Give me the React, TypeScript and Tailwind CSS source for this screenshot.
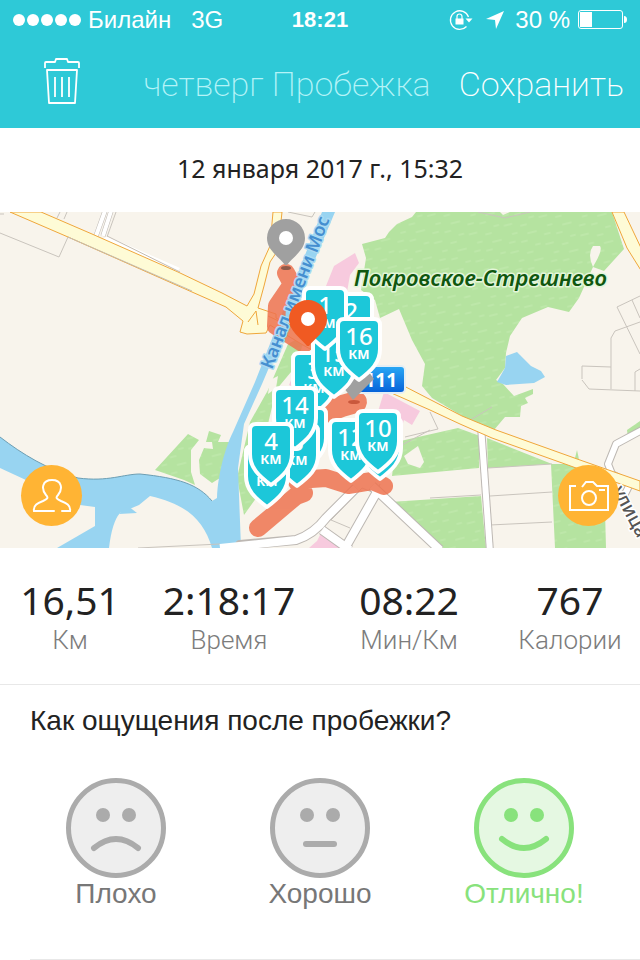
import { useState } from "react";
import clsx from "clsx";

type ShieldProps = {
  x: number;
  y: number;
  km: string;
};

const BACK_SHIELDS: ShieldProps[] = [
  { x: 351, y: 292, km: "2" },
  { x: 314, y: 351, km: "3" },
  { x: 334, y: 334, km: "15" },
  { x: 325, y: 286, km: "1" },
];

const FRONT_SHIELDS: ShieldProps[] = [
  { x: 359, y: 317, km: "16" },
  { x: 305, y: 406, km: "" },
  { x: 297, y: 423, km: "5" },
  { x: 295, y: 386, km: "14" },
  { x: 267, y: 444, km: "6" },
  { x: 271, y: 422, km: "4" },
  { x: 380, y: 416, km: "" },
  { x: 351, y: 418, km: "12" },
  { x: 378, y: 409, km: "10" },
];

const STATS = [
  { value: "16,51", label: "Км" },
  { value: "2:18:17", label: "Время" },
  { value: "08:22", label: "Мин/Км" },
  { value: "767", label: "Калории" },
];

const MOODS = [
  { id: "bad", label: "Плохо", mouth: "M28 70Q50 52 72 70" },
  { id: "good", label: "Хорошо", mouth: "M36 66H64" },
  { id: "great", label: "Отлично!", mouth: "M28 61Q50 79 72 61" },
];

function Shield({ x, y, km }: ShieldProps) {
  return (
    <g transform={`translate(${x} ${y})`} textAnchor="middle" fill="#fff">
      <path
        d="M-15 2H15Q21 2 21 8V32C21 46 12 54 0 63C-12 54 -21 46 -21 32V8Q-21 2 -15 2Z"
        fill="#1cc7d9"
        stroke="#fff"
        strokeWidth="4"
        strokeLinejoin="round"
      />
      {km ? (
        <>
          <text y="28" fontSize="24" fontWeight="500">
            {km}
          </text>
          <text y="42" fontSize="13" fontWeight="700">
            КМ
          </text>
        </>
      ) : null}
    </g>
  );
}

function Pin({ x, y, color }: { x: number; y: number; color: string }) {
  return (
    <g transform={`translate(${x} ${y})`}>
      <path
        d="M0 -19A19 19 0 0 1 19 0C19 12 8 18 1 27H-1C-8 18 -19 12 -19 0A19 19 0 0 1 0 -19Z"
        fill={color}
      />
      <circle r="7" fill="#fff" />
    </g>
  );
}

function RouteMap() {
  return (
    <svg
      viewBox="0 212 640 336"
      className="block h-auto w-full bg-[#f8f4ec] font-['Noto_Sans',sans-serif]"
      role="img"
      aria-label="Карта пробежки"
    >
      <defs>
        <linearGradient id="badge" x1="0" y1="0" x2="0" y2="1">
          <stop offset="0" stopColor="#2aa9f5" />
          <stop offset="1" stopColor="#0560d8" />
        </linearGradient>
        <pattern
          id="grass"
          width="36"
          height="28"
          patternUnits="userSpaceOnUse"
          patternTransform="rotate(-14)"
        >
          <rect width="36" height="28" fill="#b5e3a0" />
          <path
            d="M3 5h7M19 9h5M29 3h4M9 15h4M24 18h8M4 23h5M16 25h5"
            stroke="#bde7a9"
            strokeWidth="2"
            strokeLinecap="round"
          />
        </pattern>
      </defs>

      {/* parks */}
      <g fill="url(#grass)">
        <path d="M416 212L412 217L397 224L389 232L385 238L362 244L366 258L361 290L375 300L380 318L399 309L412 340L425 364L422 386L432 398L462 416L494 430L505 417L520 417L521 406L528 403L525 398L533 394L533 389L514 396L503 384L496 380L505 368L506 353L510 336L522 318L548 307L569 312L579 298L593 267L604 271L624 249L612 212Z" />
        <path d="M396 442L458 428L480 436L479 468L392 476Z" />
        <path d="M487 438L552 464L488 468Z" />
        <path d="M390 502L481 496L486 548H442Z" />
        <path d="M551 464L567 464L574 462L577 450L580 464L604 472L606 548H555Z" />
        <path d="M155 470L188 434L199 440L191 450V472L195 485L184 480Z" />
        <path d="M209 431L221 435L218 442L230 442L220 478L212 483L200 474L199 460L204 448L213 449L212 442L206 442Z" />
        <path d="M288 344L306 334L296 366L276 390L268 424L262 490L244 515L237 478L250 422L268 390Z" />
        <path d="M627 430L640 421V434L628 438Z" />
      </g>
      <g fill="#f8f4ec">
        <path d="M593 267Q587 254 593 246H600Q603 250 594 265Z" />
        <path d="M500 212L503 215L510 212Z" />
        <path d="M404 456L418 446L424 462L420 468L408 464Z" />
        <path d="M270 380L278 376L276 388L268 394Z" />
      </g>

      {/* districts */}
      <g fill="#f7cade">
        <path d="M334 266L355 253L359 263L350 275L347 292L326 286Z" />
        <path d="M384 392L420 411L412 425L404 420L400 432L376 418Z" />
        <path d="M321 533L345 548H309L317 541Z" />
        <path d="M289 385L300 360L306 370L300 390Z" />
      </g>

      {/* water */}
      <g fill="#98d4f1">
        <path d="M0 437C22 454 48 470 78 478C108 482 124 474 140 474C178 478 198 484 212 501L217 498C218 472 226 446 233 432L255 382L322 212H335L262 384L244 424L238 468L241 548H212C204 520 186 504 150 496L139 505L120 513Q112 522 109 548H57L95 526V507L80 505L0 468Z" />
        <path d="M497 382L505 368L506 356L517 352L531 366L541 371L545 377L534 383L506 385Z" />
      </g>
      <path d="M128 506L137 513L119 514Z" fill="#98d4f1" />
      <path
        d="M0 437C22 454 48 470 78 478C108 482 124 474 140 474C178 478 198 484 212 501"
        fill="none"
        stroke="#6d9eb3"
      />

      {/* minor streets */}
      <g fill="none" stroke="#c9c4bd" strokeWidth="1">
        <path d="M0 233L59 257L68 237M57 218L60 212M64 219L67 212M107 237L116 212" />
        <path d="M288 212L312 217L315 212M0 214H4" />
        <path d="M640 296L617 307L640 354M632 300L640 318M640 322L615 331L611 338V389M582 379V366L611 367M582 380L589 389L640 391M635 391V372L640 369" />
        <path d="M405 437L438 429L430 412M430 498L481 495M490 496L552 492M490 525L552 522M400 446L430 430M488 468L552 464" />
        <path d="M350 528L331 520L362 488L372 492M380 484L378 490M389 502L442 548M138 548L220 544" />
        <path d="M467 422L492 407M478 212L505 218L530 212" />
      </g>
      <g fill="none" strokeLinejoin="round">
        <g stroke="#bdb8b3" strokeWidth="10">
          <path d="M238 552L240 545L296 540Q314 534 326 518L356 488M322 530L350 550" />
          <path d="M344 550L378 490M372 486L440 550" />
          <path d="M481 426L490 552" strokeWidth="8" />
          <path d="M96 236L106 208M103 236L112 208" strokeWidth="5" />
          <path d="M642 430L616 444L608 464L612 474L630 484L624 496" strokeWidth="8" />
        </g>
        <g stroke="#fff" strokeWidth="8">
          <path d="M220 548L296 540Q314 534 326 518L356 488M322 530L350 550" />
          <path d="M344 550L378 490M372 486L440 550" />
          <path d="M481 426L490 552" strokeWidth="6" />
          <path d="M96 236L106 208M103 236L112 208" strokeWidth="4" />
          <path d="M642 430L616 444L608 464L612 474L630 484L624 496" strokeWidth="6" />
        </g>
      </g>

      {/* highways */}
      <path d="M107 236L180 268L176 274L100 242Z" fill="#fff" />
      <g stroke="#efa63a" strokeWidth="1" fill="#fefbd6">
        <path d="M10 212L68 237L192 292L226 307L243 321L240 332L247 334L266 333L270 325L303 345L380 388L430 410L460 424L492 438L565 464L640 491V481L580 460L496 430L462 416L400 384L340 354L276 318V314L258 308L264 286L270 262L278 250L282 212H273L270 246L261 266L254 294L247 306L222 293L178 272L92 234L41 212Z" />
        <path d="M612 212H624L642 250V272L627 248Z" />
      </g>
      <path
        d="M107 236L180 272M68 237L192 291"
        stroke="#c4bcb2"
        fill="none"
      />
      <path d="M248 322L256 311L258 325M268 316L302 332" stroke="#efa63a" fill="none" />

      {/* track */}
      <g
        fill="none"
        stroke="#ee7350"
        strokeLinecap="round"
        strokeLinejoin="round"
        strokeWidth="18"
        opacity="0.85"
      >
        <path d="M286 273L292 284L277 306L276 326L304 344" />
        <path d="M356 402L342 406L326 412" strokeWidth="22" />
        <path d="M258 528L296 496L304 493L296 480L326 478L348 485L372 481L384 486" />
      </g>

      <g fontWeight="600" strokeLinejoin="round" paintOrder="stroke">
        <text
          transform="translate(272 370) rotate(-69)"
          fontSize="18"
          fill="#458fd0"
          stroke="#a9daf3"
          strokeWidth="3"
        >
          Канал имени Мос
        </text>
        <text
          x="354"
          y="286"
          fontSize="22"
          fontStyle="italic"
          fill="#10570f"
          stroke="#e4f6da"
          strokeWidth="3"
        >
          Покровское-Стрешнево
        </text>
        <text
          transform="translate(612 490) rotate(62)"
          fontSize="19"
          fontWeight="500"
          fill="#555"
          stroke="#fff"
          strokeWidth="3"
        >
          улица
        </text>
      </g>

      <Pin x={286} y={238} color="#a0a0a0" />
      <ellipse cx="286" cy="268" rx="5" ry="2" fill="#8f5a49" />
      <rect
        x="356"
        y="366"
        width="49"
        height="27"
        rx="4"
        fill="url(#badge)"
        stroke="#e5eef4"
        strokeWidth="2"
      />
      <text x="397" y="387" fontSize="19" fontWeight="700" fill="#fff" textAnchor="end">
        111
      </text>
      <path d="M344 388L366 368L374 379L353 400Z" fill="#a0a0a0" />
      <ellipse cx="354" cy="402" rx="6" ry="2" fill="#c9583c" />
      {BACK_SHIELDS.map((shield) => (
        <Shield key={`${shield.x}-${shield.y}`} {...shield} />
      ))}
      {FRONT_SHIELDS.map((shield) => (
        <Shield key={`${shield.x}-${shield.y}`} {...shield} />
      ))}
      <Pin x={308} y={319} color="#f05a22" />
    </svg>
  );
}

function StatusBar() {
  return (
    <div className="grid h-10 grid-cols-[1fr_auto_1fr] items-center px-3 text-[24px] leading-none">
      <div className="flex items-center">
        <svg width="70" height="14" viewBox="0 0 70 14" fill="currentColor">
          {[6, 20, 34, 48, 62].map((cx) => (
            <circle key={cx} cx={cx + 1} cy="7" r="6" />
          ))}
        </svg>
        <span className="ml-1.5">Билайн</span>
        <span className="ml-5">3G</span>
      </div>
      <span className="text-[22px] font-bold">18:21</span>
      <div className="flex items-center justify-end">
        <svg width="24" height="22" viewBox="0 0 24 22" fill="none" stroke="currentColor">
          <path d="M19.500 8A9.300 9.300 0 1 0 17.500 17.500" strokeWidth="1.3" />
          <path d="M16.500 9.500h7l-3.500 4z" fill="currentColor" stroke="none" />
          <rect x="6.500" y="9.500" width="8" height="6" fill="currentColor" stroke="none" />
          <path d="M8 10V7.500a2.500 2.500 0 0 1 5 0V10" strokeWidth="1.200" />
        </svg>
        <svg width="20" height="18" viewBox="0 0 20 18" className="ml-3" fill="currentColor">
          <path d="M19 0L11 18L10 9L1 8Z" />
        </svg>
        <span className="ml-2.5">30 %</span>
        <svg width="50" height="20" viewBox="0 0 50 20" className="ml-2" fill="none">
          <rect x="0.500" y="0.500" width="44" height="18" rx="2.500" stroke="currentColor" />
          <path d="M2 2H14V17H2ZM46 6Q49 6 49 9.500Q49 13 46 13Z" fill="currentColor" />
        </svg>
      </div>
    </div>
  );
}

function TrashIcon() {
  return (
    <svg
      width="38"
      height="48"
      viewBox="0 0 38 48"
      fill="none"
      stroke="currentColor"
      strokeWidth="1.8"
      strokeLinejoin="round"
    >
      <path d="M2 11V6Q2 5 3 5H12L13 2H24L25 5H35Q36 5 36 6V11" />
      <path d="M4 13H34L32 46H6ZM12 20V40M19 20V40M26 20V40" />
    </svg>
  );
}

export default function App() {
  const [mood, setMood] = useState("great");

  return (
    <div className="min-h-screen w-full bg-white font-['Liberation_Sans',sans-serif] text-[#222]">
      <header className="bg-[#2ec9d7] text-white">
        <StatusBar />
        <div className="flex h-22 items-center pr-4 pl-[43px] font-['Roboto',sans-serif] text-[34px] leading-10 font-extralight">
          <button type="button" aria-label="Удалить" className="pb-1.5">
            <TrashIcon />
          </button>
          <h1 className="flex-1 pr-7 text-right whitespace-nowrap text-[#b5f3f7]">
            четверг Пробежка
          </h1>
          <button type="button">Сохранить</button>
        </div>
      </header>

      <p className="pt-[22px] pb-[26px] text-center font-['Noto_Sans',sans-serif] text-[25px] leading-9">
        12 января 2017 г., 15:32
      </p>

      <section className="relative">
        <RouteMap />
        <button
          type="button"
          aria-label="Профиль"
          className="absolute bottom-[22px] left-[21px] grid size-[61px] place-items-center rounded-full bg-[#ffb434] text-white"
        >
          <svg width="40" height="36" viewBox="0 0 40 36" fill="none" stroke="currentColor" strokeWidth="2" strokeLinecap="round">
            <path d="M22 33H2C1 27 6 25 11 23C15 21 17 20 14 17C9 11 10 2 20 2S31 11 26 17C23 20 25 21 29 23C34 25 39 27 38 33H30" />
          </svg>
        </button>
        <button
          type="button"
          aria-label="Добавить фото"
          className="absolute right-[21px] bottom-[22px] grid size-[61px] place-items-center rounded-full bg-[#ffb434] text-white"
        >
          <svg width="40" height="32" viewBox="0 0 40 32" fill="none" stroke="currentColor" strokeWidth="2">
            <path d="M7 6H1V30H39V6H28L24 2H17L13 7M30 10H36" />
            <circle cx="20" cy="18" r="7" />
          </svg>
        </button>
      </section>

      <dl className="grid grid-cols-[140fr_178fr_182fr_140fr] border-b border-[#e8e8e8] pt-7 pb-7 text-center">
        {STATS.map((stat) => (
          <div key={stat.label} className="flex flex-col-reverse">
            <dt className="font-['Roboto',sans-serif] text-[26px] leading-8 font-light text-[#7c7c7c]">
              {stat.label}
            </dt>
            <dd className="font-['Noto_Sans',sans-serif] text-[39px] leading-12">
              {stat.value}
            </dd>
          </div>
        ))}
      </dl>

      <fieldset>
        <legend className="px-[30px] pt-4 text-[28px] leading-10">
          Как ощущения после пробежки?
        </legend>
        <div className="grid grid-cols-3 px-3.5 pt-[37px] pb-[49px]">
          {MOODS.map((item) => (
            <label
              key={item.id}
              className={clsx(
                "relative flex cursor-pointer flex-col items-center text-[28px] leading-8",
                mood === item.id ? "text-[#88e27c]" : "text-[#ababab]",
              )}
            >
              <input
                type="radio"
                name="mood"
                className="sr-only"
                checked={mood === item.id}
                onChange={() => setMood(item.id)}
              />
              <svg width="100" height="100" viewBox="0 0 100 100" fill="none" stroke="currentColor">
                <circle
                  cx="50"
                  cy="50"
                  r="47.500"
                  strokeWidth="5"
                  fill={mood === item.id ? "#e5f8e2" : "#eee"}
                />
                <circle cx="37" cy="37" r="7" fill="currentColor" stroke="none" />
                <circle cx="63" cy="37" r="7" fill="currentColor" stroke="none" />
                <path d={item.mouth} strokeWidth="6" strokeLinecap="round" />
              </svg>
              <span className={mood === item.id ? "" : "text-[#777]"}>
                {item.label}
              </span>
            </label>
          ))}
        </div>
      </fieldset>
      <hr className="ml-[30px] border-[#e8e8e8]" />
    </div>
  );
}
